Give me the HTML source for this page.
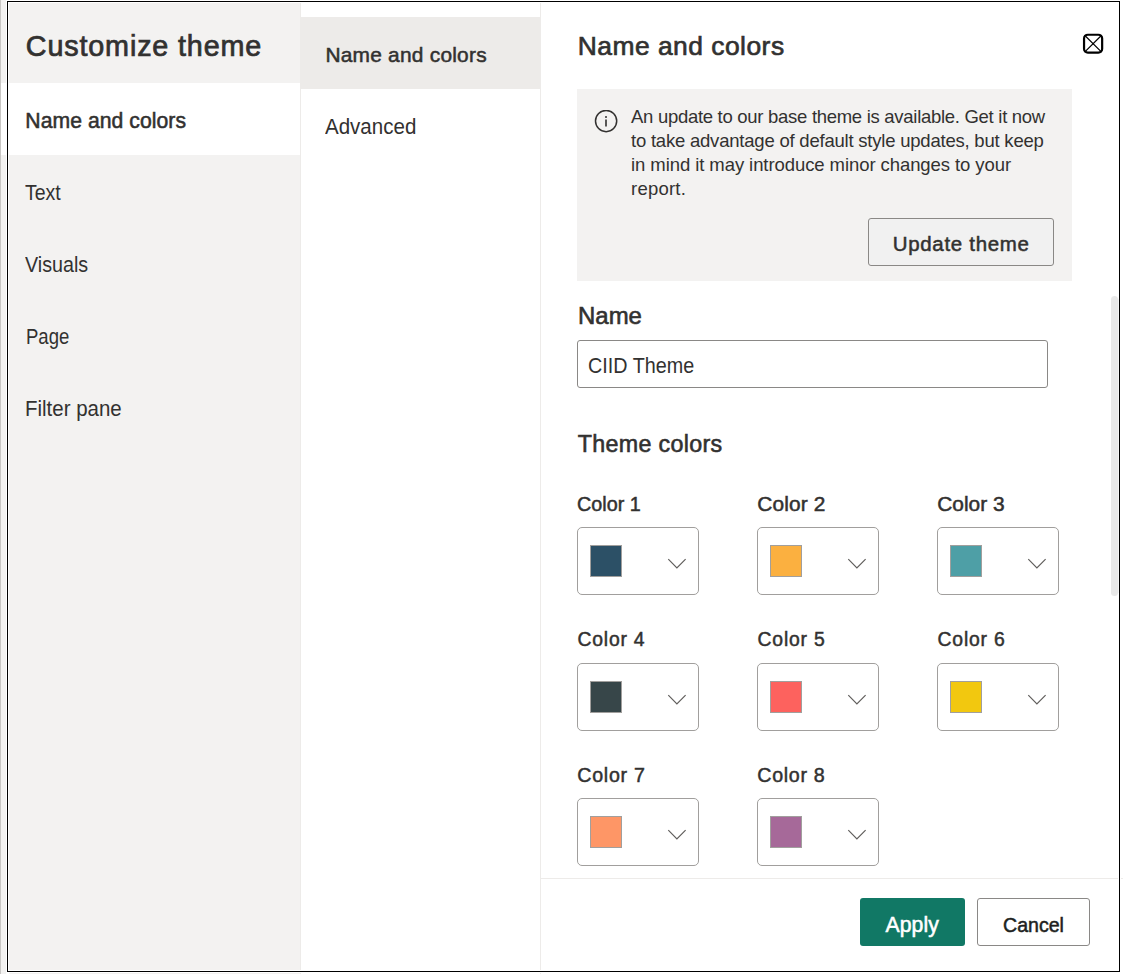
<!DOCTYPE html>
<html>
<head>
<meta charset="utf-8">
<style>
html,body{margin:0;padding:0;background:#fff;width:1123px;height:974px;overflow:hidden;position:relative;font-family:"Liberation Sans",sans-serif;color:#323130;}
.a{position:absolute;}
.t{position:absolute;white-space:nowrap;line-height:1;}
.b{font-weight:bold;}

#strip0{left:0;top:0;width:1px;height:974px;background:#c8c6c4;}
#strip1{left:1px;top:0;width:5px;height:974px;background:#f3f2f1;}
#dlg{left:7px;top:1px;width:1111px;height:969px;border:1px solid #000;background:#fff;}
#nav{left:9px;top:3px;width:291px;height:967px;background:#f3f2f1;}
#midline0{left:300px;top:3px;width:1px;height:967px;background:#edebe9;}
#navsel{left:9px;top:83px;width:291px;height:72px;background:#fff;}
#midsel{left:300px;top:17px;width:240px;height:72px;background:#edebe9;}
#midline{left:540px;top:3px;width:1px;height:967px;background:#edebe9;}
#footline{left:541px;top:878px;width:577px;height:1px;background:#edebe9;}
#msg{left:577px;top:89px;width:495px;height:192px;background:#f3f2f1;}
#upd{left:868px;top:218px;width:184px;height:46px;border:1px solid #8a8886;border-radius:3px;background:#f1f1f1;}
#inp{left:577px;top:340px;width:469px;height:46px;border:1px solid #8a8886;border-radius:3px;background:#fff;}
.dd{position:absolute;width:120px;height:66px;border:1px solid #a19f9d;border-radius:5px;background:#fff;}
.sw{position:absolute;left:12px;top:17px;width:30px;height:30px;border:1px solid #a19f9d;}
.chev{position:absolute;left:88px;top:30px;}
#scroll{left:1111px;top:296px;width:7px;height:300px;background:#e8e8e8;border-radius:4px;}
#scroll2{left:1118px;top:299px;width:1px;height:294px;background:#f4f4f4;}
#apply{left:860px;top:898px;width:105px;height:48px;background:#117865;border-radius:3px;}
#cancel{left:977px;top:898px;width:111px;height:46px;border:1px solid #8a8886;border-radius:3px;background:#fff;}
.ml{position:absolute;left:0;white-space:nowrap;}
</style>
</head>
<body>
<div class="a" id="strip0"></div>
<div class="a" id="strip1"></div>
<div class="a" style="left:1px;top:83px;width:5px;height:72px;background:#fff;"></div>
<div class="a" id="dlg"></div>
<div class="a" id="nav"></div>
<div class="a" id="navsel"></div>
<div class="a" id="midline0"></div>
<div class="a" id="midsel"></div>
<div class="a" id="midline"></div>
<div class="a" id="footline"></div>
<div class="a" style="left:1121px;top:878px;width:2px;height:1px;background:#edebe9;"></div>
<div class="a" style="left:9px;top:973px;width:291px;height:1px;background:#f3f2f1;"></div>
<div class="a" style="left:300px;top:973px;width:1px;height:1px;background:#edebe9;"></div>
<div class="a" style="left:540px;top:973px;width:1px;height:1px;background:#edebe9;"></div>

<div class="t sb" style="left:25.80px;top:32.00px;font-size:28.75px;letter-spacing:0.842px;-webkit-text-stroke:0.72px currentColor;">Customize theme</div>
<div class="t sb" style="left:25.30px;top:110.00px;font-size:21.18px;letter-spacing:0.045px;-webkit-text-stroke:0.53px currentColor;">Name and colors</div>
<div class="t" style="left:25.10px;top:182.00px;font-size:21.66px;letter-spacing:0.000px;transform:scaleX(0.9008);transform-origin:0 0;">Text</div>
<div class="t" style="left:25.00px;top:254.00px;font-size:22.09px;letter-spacing:0.000px;transform:scaleX(0.8922);transform-origin:0 0;">Visuals</div>
<div class="t" style="left:25.95px;top:326.00px;font-size:21.80px;letter-spacing:0.000px;transform:scaleX(0.8502);transform-origin:0 0;">Page</div>
<div class="t" style="left:25.47px;top:398.00px;font-size:22.09px;letter-spacing:0.000px;transform:scaleX(0.9270);transform-origin:0 0;">Filter pane</div>

<div class="t sb" style="left:325.40px;top:45.00px;font-size:20.90px;letter-spacing:0.236px;-webkit-text-stroke:0.52px currentColor;">Name and colors</div>
<div class="t" style="left:325.20px;top:116.00px;font-size:22.09px;letter-spacing:0.000px;transform:scaleX(0.9297);transform-origin:0 0;">Advanced</div>

<div class="t sb" style="left:577.70px;top:33.00px;font-size:26.44px;letter-spacing:0.469px;-webkit-text-stroke:0.66px currentColor;">Name and colors</div>
<svg class="a" style="left:1082px;top:33px;" width="23" height="23" viewBox="0 0 23 23">
  <rect x="2.05" y="1.75" width="18.1" height="17.9" rx="3.8" fill="none" stroke="#000" stroke-width="2.2"/>
  <path d="M2.6 2.3 L19.6 19.1 M19.6 2.3 L2.6 19.1" stroke="#000" stroke-width="1.2"/>
</svg>

<div class="a" id="msg"></div>
<svg class="a" style="left:594px;top:110px;" width="24" height="24" viewBox="0 0 24 24">
  <circle cx="12.1" cy="11.05" r="10.6" fill="none" stroke="#323130" stroke-width="1.5"/>
  <rect x="11.2" y="9.5" width="1.6" height="7" fill="#323130"/>
  <circle cx="12" cy="7" r="1" fill="#323130"/>
</svg>
<div class="t" style="left:631.0px;top:108px;font-size:18.5px;letter-spacing:-0.287px;">An update to our base theme is available. Get it now</div>
<div class="t" style="left:631.0px;top:132px;font-size:18.5px;letter-spacing:-0.214px;">to take advantage of default style updates, but keep</div>
<div class="t" style="left:631.0px;top:156px;font-size:18.5px;letter-spacing:-0.076px;">in mind it may introduce minor changes to your</div>
<div class="t" style="left:631.0px;top:180px;font-size:18.5px;letter-spacing:0.237px;">report.</div>
<div class="a" id="upd"></div>
<div class="t sb" style="left:892.70px;top:234.00px;font-size:20.48px;letter-spacing:0.700px;-webkit-text-stroke:0.51px currentColor;">Update theme</div>

<div class="t sb" style="left:577.70px;top:304.00px;font-size:23.99px;letter-spacing:0.000px;transform:scaleX(0.9991);transform-origin:0 0;-webkit-text-stroke:0.60px currentColor;">Name</div>
<div class="a" id="inp"></div>
<div class="t" style="left:587.59px;top:355.00px;font-size:21.80px;letter-spacing:0.000px;transform:scaleX(0.9067);transform-origin:0 0;">CIID Theme</div>

<div class="t sb" style="left:577.80px;top:433.00px;font-size:23.28px;letter-spacing:0.304px;-webkit-text-stroke:0.58px currentColor;">Theme colors</div>

<div class="t sb" style="left:577.35px;top:494.00px;font-size:20.90px;letter-spacing:0.000px;transform:scaleX(0.9465);transform-origin:0 0;-webkit-text-stroke:0.52px currentColor;">Color 1</div>
<div class="dd" style="left:577px;top:527px;"><div class="sw" style="background:#2c5066;"></div><svg class="chev" width="22" height="12" viewBox="0 0 22 12"><path d="M2.3 1.1 L10.9 9.9 L19.6 1.1" fill="none" stroke="#605e5c" stroke-width="1.2"/></svg></div>
<div class="t sb" style="left:757.30px;top:494.00px;font-size:20.90px;letter-spacing:0.123px;-webkit-text-stroke:0.52px currentColor;">Color 2</div>
<div class="dd" style="left:757px;top:527px;"><div class="sw" style="background:#fbb040;"></div><svg class="chev" width="22" height="12" viewBox="0 0 22 12"><path d="M2.3 1.1 L10.9 9.9 L19.6 1.1" fill="none" stroke="#605e5c" stroke-width="1.2"/></svg></div>
<div class="t sb" style="left:937.30px;top:494.00px;font-size:20.90px;letter-spacing:-0.011px;-webkit-text-stroke:0.52px currentColor;">Color 3</div>
<div class="dd" style="left:937px;top:527px;"><div class="sw" style="background:#4e9fa6;"></div><svg class="chev" width="22" height="12" viewBox="0 0 22 12"><path d="M2.3 1.1 L10.9 9.9 L19.6 1.1" fill="none" stroke="#605e5c" stroke-width="1.2"/></svg></div>
<div class="t sb" style="left:577.50px;top:630.00px;font-size:19.36px;letter-spacing:0.783px;-webkit-text-stroke:0.48px currentColor;">Color 4</div>
<div class="dd" style="left:577px;top:663px;"><div class="sw" style="background:#374649;"></div><svg class="chev" width="22" height="12" viewBox="0 0 22 12"><path d="M2.3 1.1 L10.9 9.9 L19.6 1.1" fill="none" stroke="#605e5c" stroke-width="1.2"/></svg></div>
<div class="t sb" style="left:757.50px;top:630.00px;font-size:19.36px;letter-spacing:0.817px;-webkit-text-stroke:0.48px currentColor;">Color 5</div>
<div class="dd" style="left:757px;top:663px;"><div class="sw" style="background:#fd625e;"></div><svg class="chev" width="22" height="12" viewBox="0 0 22 12"><path d="M2.3 1.1 L10.9 9.9 L19.6 1.1" fill="none" stroke="#605e5c" stroke-width="1.2"/></svg></div>
<div class="t sb" style="left:937.50px;top:630.00px;font-size:19.36px;letter-spacing:0.817px;-webkit-text-stroke:0.48px currentColor;">Color 6</div>
<div class="dd" style="left:937px;top:663px;"><div class="sw" style="background:#f2c80f;"></div><svg class="chev" width="22" height="12" viewBox="0 0 22 12"><path d="M2.3 1.1 L10.9 9.9 L19.6 1.1" fill="none" stroke="#605e5c" stroke-width="1.2"/></svg></div>
<div class="t sb" style="left:577.30px;top:766.00px;font-size:19.64px;letter-spacing:0.725px;-webkit-text-stroke:0.49px currentColor;">Color 7</div>
<div class="dd" style="left:577px;top:798px;"><div class="sw" style="background:#fe9666;"></div><svg class="chev" width="22" height="12" viewBox="0 0 22 12"><path d="M2.3 1.1 L10.9 9.9 L19.6 1.1" fill="none" stroke="#605e5c" stroke-width="1.2"/></svg></div>
<div class="t sb" style="left:757.30px;top:766.00px;font-size:19.64px;letter-spacing:0.692px;-webkit-text-stroke:0.49px currentColor;">Color 8</div>
<div class="dd" style="left:757px;top:798px;"><div class="sw" style="background:#a66999;"></div><svg class="chev" width="22" height="12" viewBox="0 0 22 12"><path d="M2.3 1.1 L10.9 9.9 L19.6 1.1" fill="none" stroke="#605e5c" stroke-width="1.2"/></svg></div>

<div class="a" id="scroll"></div>
<div class="a" id="scroll2"></div>

<div class="a" id="apply"></div>
<div class="t sb" style="left:885.60px;top:914.00px;font-size:21.18px;letter-spacing:0.064px;-webkit-text-stroke:0.53px currentColor;color:#fff;">Apply</div>
<div class="a" id="cancel"></div>
<div class="t sb" style="left:1002.77px;top:914.00px;font-size:21.04px;letter-spacing:0.000px;transform:scaleX(0.9307);transform-origin:0 0;-webkit-text-stroke:0.53px currentColor;color:#201f1e;">Cancel</div>
</body>
</html>
